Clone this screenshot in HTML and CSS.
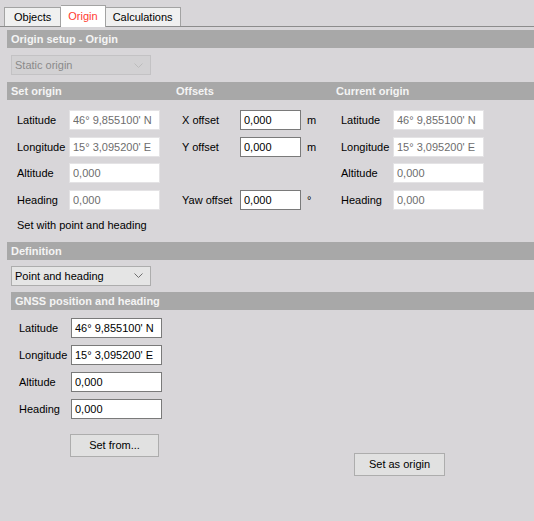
FILE: index.html
```html
<!DOCTYPE html>
<html lang="en">
<head>
    <meta charset="UTF-8">
    <title>Origin setup</title>
    <link rel="stylesheet" href="styles.css">
</head>
<body>
    <div class="tabs">
        <div class="tab">Objects</div>
        <div class="tab active">Origin</div>
        <div class="tab">Calculations</div>
    </div>

    <div class="panel">
        <div class="bar">Origin setup - Origin</div>
        <div class="combo disabled mode">
            <span>Static origin</span>
            <svg width="9" height="5" viewBox="0 0 9 5"><path d="M0.5 0.5 L4.5 4.5 L8.5 0.5" fill="none" stroke="currentColor"/></svg>
        </div>

        <div class="bar cols">
            <span>Set origin</span>
            <span>Offsets</span>
            <span>Current origin</span>
        </div>
        <div class="cols body">
            <div class="col">
                <div class="row"><label>Latitude</label><input class="field wide" disabled value="46° 9,855100' N"></div>
                <div class="row"><label>Longitude</label><input class="field wide" disabled value="15° 3,095200' E"></div>
                <div class="row"><label>Altitude</label><input class="field wide" disabled value="0,000"></div>
                <div class="row"><label>Heading</label><input class="field wide" disabled value="0,000"></div>
                <p class="note">Set with point and heading</p>
            </div>
            <div class="col offsets">
                <div class="row"><label>X offset</label><input class="field short" value="0,000"><span class="unit">m</span></div>
                <div class="row"><label>Y offset</label><input class="field short" value="0,000"><span class="unit">m</span></div>
                <div class="row"></div>
                <div class="row"><label>Yaw offset</label><input class="field short" value="0,000"><span class="unit">°</span></div>
            </div>
            <div class="col">
                <div class="row"><label>Latitude</label><input class="field wide" disabled value="46° 9,855100' N"></div>
                <div class="row"><label>Longitude</label><input class="field wide" disabled value="15° 3,095200' E"></div>
                <div class="row"><label>Altitude</label><input class="field wide" disabled value="0,000"></div>
                <div class="row"><label>Heading</label><input class="field wide" disabled value="0,000"></div>
            </div>
        </div>

        <div class="bar definition">Definition</div>
        <div class="combo definition-combo">
            <span>Point and heading</span>
            <svg width="9" height="5" viewBox="0 0 9 5"><path d="M0.5 0.5 L4.5 4.5 L8.5 0.5" fill="none" stroke="currentColor"/></svg>
        </div>

        <div class="gnss">
            <div class="bar">GNSS position and heading</div>
            <div class="gnss-rows">
                <div class="row"><label>Latitude</label><input class="field wide" value="46° 9,855100' N"></div>
                <div class="row"><label>Longitude</label><input class="field wide" value="15° 3,095200' E"></div>
                <div class="row"><label>Altitude</label><input class="field wide" value="0,000"></div>
                <div class="row"><label>Heading</label><input class="field wide" value="0,000"></div>
            </div>
            <div class="actions">
                <button class="btn set-from">Set from...</button>
                <button class="btn set-origin">Set as origin</button>
            </div>
        </div>
    </div>
</body>
</html>
```

FILE: styles.css
```css
* {
    margin: 0;
    padding: 0;
    box-sizing: border-box;
    font-family: 'Liberation Sans', Arial, sans-serif;
    font-size: 11px;
}

body {
    background: #d8d6d9;
    color: #000;
    width: 534px;
    height: 521px;
    overflow: hidden;
}

/* tab strip */
.tabs {
    display: flex;
    align-items: flex-end;
    height: 27px;
    padding-left: 4px;
    border-bottom: 1px solid #8c8c8c;
}

.tab {
    height: 19px;
    padding: 0 7px;
    line-height: 18px;
    background: #f0f0f0;
    border: 1px solid #a3a3a3;
    border-bottom: none;
}

.tab:first-child {
    padding: 0 9px;
}

.tab + .tab {
    border-left: none;
}

.tab.active {
    height: 22px;
    margin-bottom: -1px;
    padding: 0 7px;
    background: #fff;
    color: #ff3b30;
    line-height: 21px;
}

/* panel */
.panel {
    padding: 3px 0 0 7px;
}

.bar {
    height: 18px;
    line-height: 18px;
    background: #a8a8a8;
    color: #f4f4f4;
    font-weight: bold;
    padding-left: 4px;
}

.bar span {
    font-weight: bold;
}

.combo {
    display: flex;
    align-items: center;
    justify-content: space-between;
    width: 140px;
    height: 20px;
    margin-left: 4px;
    padding: 0 7px 0 3px;
    background: #e5e5e5;
    border: 1px solid #adadad;
    color: #6f6f6f;
}

.combo span {
    color: #000;
}

.combo.disabled {
    background: #d2d1d3;
    border-color: #c3c2c4;
    color: #bcbcbc;
}

.combo.disabled span {
    color: #8a8a8a;
}

.mode {
    margin-top: 7px;
    margin-bottom: 7px;
}

.definition-combo {
    margin-top: 6px;
    margin-bottom: 6px;
}

.cols {
    display: grid;
    grid-template-columns: 165px 160px 1fr;
}

.bar.cols {
    padding-left: 0;
}

.bar.cols span {
    padding-left: 4px;
}

.body {
    padding-top: 10px;
}

.col {
    padding-left: 10px;
    display: flex;
    flex-direction: column;
    gap: 6.67px;
}

.col:last-child {
    padding-left: 9px;
}

.row {
    display: flex;
    align-items: center;
    height: 20px;
}

.row label {
    width: 52px;
}

.offsets .row label {
    width: 58px;
}

.field {
    height: 20px;
    padding: 0 3px;
    background: #fff;
    border: 1px solid #7a7a7a;
    color: #000;
    outline: none;
}

.field:disabled {
    border-color: #e4e3e5;
    color: #6d6d6d;
}

.field.wide {
    width: 91px;
}

.field.short {
    width: 61px;
}

.unit {
    margin-left: 6px;
}

.note {
    margin-top: 2px;
}

.definition {
    margin-top: 11px;
}

/* GNSS block */
.gnss {
    margin-left: 4px;
}

.gnss-rows {
    padding: 8px 0 0 8px;
    display: flex;
    flex-direction: column;
    gap: 7px;
}

.actions {
    display: flex;
    align-items: flex-start;
    margin-top: 15px;
    padding-left: 59px;
}

.btn {
    height: 23px;
    background: #e1e1e1;
    border: 1px solid #adadad;
    color: #000;
}

.set-from {
    width: 89px;
}

.set-origin {
    width: 91px;
    margin: 19px 0 0 195px;
}
```
